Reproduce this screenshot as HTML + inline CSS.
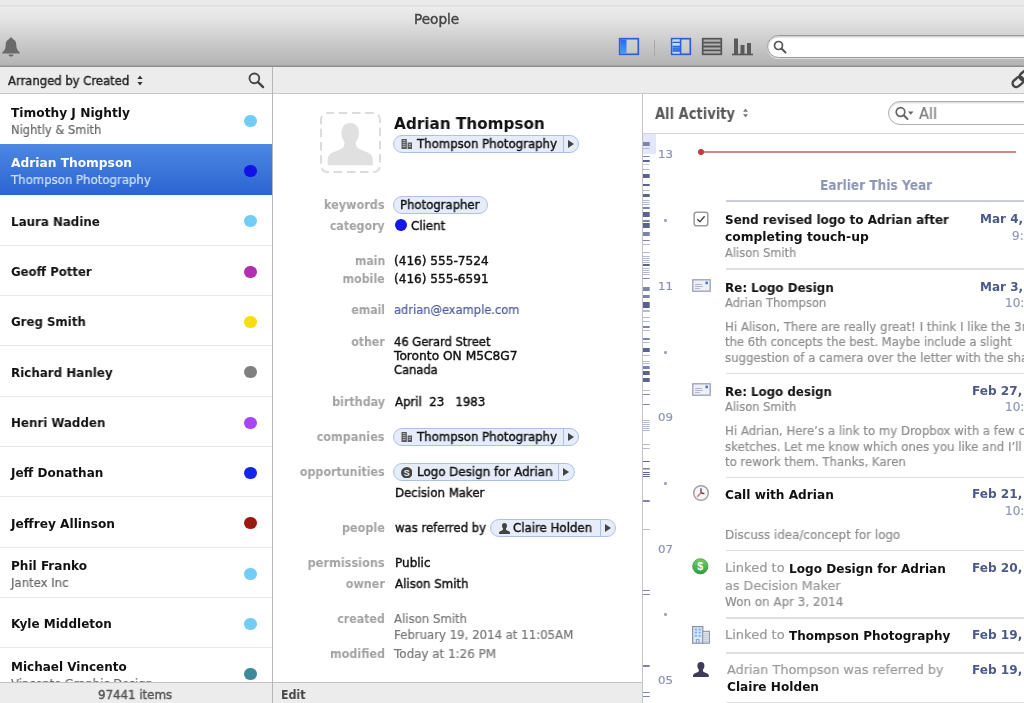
<!DOCTYPE html>
<html><head><meta charset="utf-8"><title>People</title>
<style>
*{box-sizing:border-box;margin:0;padding:0}
html,body{width:1024px;height:703px;overflow:hidden;background:#fff}
body{font-family:"DejaVu Sans","Liberation Sans",sans-serif;font-size:12px;color:#111;position:relative}
.a{position:absolute;white-space:nowrap}
.x{line-height:16px;will-change:transform}
#titlebar{left:0;top:0;width:1024px;height:67px;background:linear-gradient(#ebebeb 0,#e9e9e9 5px,#d9d9d9 6px,#ececec 7px,#e3e3e3 20px,#cdcdcd 40px,#b4b4b4 65px,#8e8e8e 66px,#8e8e8e 67px)}
#subbar{left:0;top:67px;width:1024px;height:27px;background:#ececec;border-bottom:1px solid #c8c8c8}
#vdiv1{left:271.6px;top:67px;width:1.4px;height:636px;background:#b6b6b6}
#vdiv2{left:641.8px;top:94px;width:1.4px;height:609px;background:#c2c2c8}
#status{left:0;top:682px;width:642px;height:21px;background:#ececec;border-top:1px solid #c2c2c2}
.pill{height:18px;border:1px solid #adc1e8;border-radius:9px;background:#e6edf9}
.pill i{position:absolute;top:0;width:1px;height:16px;background:#adc1e8}
.sep{left:725.5px;width:299px;height:1.6px;background:#dedede}
</style></head><body>
<div class="a" id="titlebar"></div>
<div class="a" id="subbar"></div>
<div class="a" style="left:0;top:143.8px;width:272px;height:1.2px;background:#eaeaea"></div>
<div class="a" style="left:244.4px;top:114.6px;width:12.3px;height:12.3px;border-radius:50%;background:#72cdf4"></div>
<div class="a" style="left:0;top:144px;width:272px;height:50.5px;background:linear-gradient(#4c88e3,#2b64d0)"></div>
<div class="a" style="left:244.4px;top:164.6px;width:12.3px;height:12.3px;border-radius:50%;background:#1111e8"></div>
<div class="a" style="left:0;top:244.8px;width:272px;height:1.2px;background:#eaeaea"></div>
<div class="a" style="left:244.4px;top:215.1px;width:12.3px;height:12.3px;border-radius:50%;background:#72cdf4"></div>
<div class="a" style="left:0;top:294.8px;width:272px;height:1.2px;background:#eaeaea"></div>
<div class="a" style="left:244.4px;top:265.6px;width:12.3px;height:12.3px;border-radius:50%;background:#b12fb0"></div>
<div class="a" style="left:0;top:345.3px;width:272px;height:1.2px;background:#eaeaea"></div>
<div class="a" style="left:244.4px;top:315.6px;width:12.3px;height:12.3px;border-radius:50%;background:#f6de12"></div>
<div class="a" style="left:0;top:395.8px;width:272px;height:1.2px;background:#eaeaea"></div>
<div class="a" style="left:244.4px;top:366.1px;width:12.3px;height:12.3px;border-radius:50%;background:#808080"></div>
<div class="a" style="left:0;top:445.8px;width:272px;height:1.2px;background:#eaeaea"></div>
<div class="a" style="left:244.4px;top:416.6px;width:12.3px;height:12.3px;border-radius:50%;background:#a945f2"></div>
<div class="a" style="left:0;top:496.3px;width:272px;height:1.2px;background:#eaeaea"></div>
<div class="a" style="left:244.4px;top:466.6px;width:12.3px;height:12.3px;border-radius:50%;background:#1226ea"></div>
<div class="a" style="left:0;top:546.8px;width:272px;height:1.2px;background:#eaeaea"></div>
<div class="a" style="left:244.4px;top:517.1px;width:12.3px;height:12.3px;border-radius:50%;background:#9a1a10"></div>
<div class="a" style="left:0;top:596.8px;width:272px;height:1.2px;background:#eaeaea"></div>
<div class="a" style="left:244.4px;top:567.6px;width:12.3px;height:12.3px;border-radius:50%;background:#72cdf4"></div>
<div class="a" style="left:0;top:647.3px;width:272px;height:1.2px;background:#eaeaea"></div>
<div class="a" style="left:244.4px;top:617.6px;width:12.3px;height:12.3px;border-radius:50%;background:#72cdf4"></div>
<div class="a" style="left:0;top:683.3px;width:272px;height:1.2px;background:#eaeaea"></div>
<div class="a" style="left:244.4px;top:668.1px;width:12.3px;height:12.3px;border-radius:50%;background:#3f8a98"></div>
<div class="a x" style="top:105.20px;font-size:12px;color:#111;font-weight:bold;left:10.60px;transform-origin:0 50%;transform:scaleX(1.0176);">Timothy J Nightly</div>
<div class="a x" style="top:122.20px;font-size:12px;color:#666;-webkit-text-stroke:0.2px;left:10.80px;transform-origin:0 50%;transform:scaleX(0.9543);">Nightly &amp; Smith</div>
<div class="a x" style="top:155.20px;font-size:12px;color:#fff;font-weight:bold;left:10.60px;transform-origin:0 50%;transform:scaleX(1.0191);">Adrian Thompson</div>
<div class="a x" style="top:172.20px;font-size:12px;color:#d2e2fb;-webkit-text-stroke:0.2px;left:10.80px;transform-origin:0 50%;transform:scaleX(0.9772);">Thompson Photography</div>
<div class="a x" style="top:213.80px;font-size:12px;color:#111;font-weight:bold;left:10.60px;transform-origin:0 50%;transform:scaleX(0.9876);">Laura Nadine</div>
<div class="a x" style="top:264.30px;font-size:12px;color:#111;font-weight:bold;left:10.60px;transform-origin:0 50%;transform:scaleX(0.9746);">Geoff Potter</div>
<div class="a x" style="top:314.30px;font-size:12px;color:#111;font-weight:bold;left:10.60px;transform-origin:0 50%;transform:scaleX(0.9801);">Greg Smith</div>
<div class="a x" style="top:364.80px;font-size:12px;color:#111;font-weight:bold;left:10.60px;transform-origin:0 50%;transform:scaleX(0.9916);">Richard Hanley</div>
<div class="a x" style="top:415.30px;font-size:12px;color:#111;font-weight:bold;left:10.60px;transform-origin:0 50%;transform:scaleX(0.9853);">Henri Wadden</div>
<div class="a x" style="top:465.30px;font-size:12px;color:#111;font-weight:bold;left:10.60px;transform-origin:0 50%;">Jeff Donathan</div>
<div class="a x" style="top:515.80px;font-size:12px;color:#111;font-weight:bold;left:10.60px;transform-origin:0 50%;transform:scaleX(1.0148);">Jeffrey Allinson</div>
<div class="a x" style="top:558.20px;font-size:12px;color:#111;font-weight:bold;left:10.60px;transform-origin:0 50%;transform:scaleX(1.0048);">Phil Franko</div>
<div class="a x" style="top:575.20px;font-size:12px;color:#666;-webkit-text-stroke:0.2px;left:10.80px;transform-origin:0 50%;transform:scaleX(0.9738);">Jantex Inc</div>
<div class="a x" style="top:616.30px;font-size:12px;color:#111;font-weight:bold;left:10.60px;transform-origin:0 50%;">Kyle Middleton</div>
<div class="a x" style="top:658.70px;font-size:12px;color:#111;font-weight:bold;left:10.60px;transform-origin:0 50%;">Michael Vincento</div>
<div class="a x" style="top:675.70px;font-size:12px;color:#666;-webkit-text-stroke:0.2px;left:10.80px;transform-origin:0 50%;transform:scaleX(0.9560);">Vincento Graphic Design</div>
<div class="a" id="status"></div>
<div class="a" id="vdiv1"></div>
<div class="a" id="vdiv2"></div>
<!-- sort arrows, search, bell -->
<svg class="a" style="left:135.7px;top:75px" width="8" height="11" viewBox="0 0 8 11"><path d="M4 0.5 L6.6 4 H1.4 Z M4 10.5 L6.6 7 H1.4 Z" fill="#333"/></svg>
<svg class="a" style="left:246.8px;top:70.8px" width="18.4" height="18.4" viewBox="0 0 20 20"><circle cx="8" cy="8" r="5.3" fill="none" stroke="#444" stroke-width="2"/><path d="M12 12 L17.5 17.5" stroke="#444" stroke-width="2.6" stroke-linecap="round"/></svg>
<svg class="a" style="left:0.6px;top:36px" width="20" height="22" viewBox="0 0 20 22"><path d="M10 1.5 C11 1.5 11.6 2.1 11.6 3 C14.3 3.8 15.3 6.2 15.3 9 C15.3 12.5 16.3 14.3 18.8 16.5 V17.6 H1.2 V16.5 C3.7 14.3 4.7 12.5 4.7 9 C4.7 6.2 5.7 3.8 8.4 3 C8.4 2.1 9 1.5 10 1.5 Z M7.6 18.4 H12.4 C12.4 19.8 11.4 20.6 10 20.6 C8.6 20.6 7.6 19.8 7.6 18.4 Z" fill="#6a6a6a"/></svg>
<!-- toolbar icons -->
<svg class="a" style="left:618px;top:37px" width="22" height="20" viewBox="0 0 22 20"><defs><linearGradient id="bl" x1="0" y1="0" x2="0" y2="1"><stop offset="0" stop-color="#1f6cf0"/><stop offset="1" stop-color="#4b98ff"/></linearGradient></defs><rect x="1.7" y="1.7" width="18.6" height="15.6" fill="rgba(255,255,255,.1)" stroke="#2a60d4" stroke-width="1.7"/><rect x="2.5" y="2.5" width="6" height="14" fill="url(#bl)"/></svg>
<div class="a" style="left:654px;top:40px;width:1px;height:16px;background:#a8a8a8"></div>
<svg class="a" style="left:670px;top:37px" width="22" height="20" viewBox="0 0 22 20"><rect x="1.7" y="1.7" width="18.6" height="15.6" fill="rgba(255,255,255,.12)" stroke="#2a60d4" stroke-width="1.7"/><rect x="2.5" y="2.5" width="7.5" height="14" fill="#c4d8fb"/><rect x="2.5" y="10.2" width="7.5" height="3.2" fill="#2a78f0"/><path d="M2.5 5.4 H10 M2.5 9.4 H10 M2.5 14 H10" stroke="#2a60d4" stroke-width="1.4"/><path d="M10.6 2 V17" stroke="#2a60d4" stroke-width="1.6"/></svg>
<svg class="a" style="left:701px;top:37px" width="22" height="20" viewBox="0 0 22 20"><rect x="1.7" y="1.7" width="18.6" height="15.6" fill="#b2b2b2" stroke="#555" stroke-width="1.7"/><path d="M2 5.6 H20 M2 9.5 H20 M2 13.4 H20" stroke="#555" stroke-width="1.9"/></svg>
<svg class="a" style="left:731px;top:37px" width="23" height="20" viewBox="0 0 23 20"><path d="M1 17.5 H22" stroke="#555" stroke-width="1.6"/><rect x="3" y="1.5" width="4" height="16" fill="#5a5a5a"/><rect x="9.5" y="8" width="4" height="9.5" fill="#5a5a5a"/><rect x="16" y="6" width="4" height="11.5" fill="#5a5a5a"/></svg>
<div class="a" style="left:767px;top:35px;width:280px;height:23px;border-radius:12px;background:#fff;border:1px solid #9a9a9a;box-shadow:inset 0 1px 2px rgba(0,0,0,.25),0 1px 0 rgba(255,255,255,.5)"></div>
<svg class="a" style="left:772px;top:38.6px" width="16" height="16" viewBox="0 0 16 16"><circle cx="6.5" cy="6.5" r="4" fill="none" stroke="#555" stroke-width="1.7"/><path d="M9.5 9.5 L13.5 13.5" stroke="#555" stroke-width="2" stroke-linecap="round"/></svg>
<svg class="a" style="left:1004px;top:68px" width="20" height="24" viewBox="1004 68 20 24"><g fill="none" stroke="#444" stroke-width="2.4"><rect x="-5.9" y="-3.7" width="11.8" height="7.4" rx="3.7" transform="translate(1018,81.9) rotate(-40)"/><rect x="-5.9" y="-3.7" width="11.8" height="7.4" rx="3.7" transform="translate(1025,75.2) rotate(-40)"/></g></svg>
<!-- DETAIL graphics -->
<svg class="a" style="left:318px;top:110px" width="65" height="65" viewBox="0 0 65 65"><rect x="3" y="3" width="59" height="59" rx="6.5" fill="none" stroke="#dcdcdc" stroke-width="2" stroke-dasharray="8.6 4.6" stroke-dashoffset="2"/></svg>
<svg class="a" style="left:325.3px;top:120.3px" width="50.4" height="48.4" viewBox="0 0 49 48" preserveAspectRatio="none"><path d="M24.5 3 C30 3 33 7 33 13 C33 17 31.5 20 30 22 C30 25 30.5 27 33 28.5 L42 32.5 C45 34 46.5 36.5 46.5 40 V45 H2.5 V40 C2.5 36.5 4 34 7 32.5 L16 28.5 C18.5 27 19 25 19 22 C17.5 20 16 17 16 13 C16 7 19 3 24.5 3 Z" fill="#e0e0e0"/></svg>
<div class="a pill" style="left:393px;top:135px;width:186px"><svg style="position:absolute;left:6.5px;top:2.5px" width="11.6" height="10" viewBox="0 0 11 10" preserveAspectRatio="none"><path d="M0.5 0 H5.5 V10 H0.5 Z M6.3 3.5 H10.5 V10 H6.3 Z" fill="#555"/><path d="M1.6 1.7 H4.4 M1.6 3.7 H4.4 M1.6 5.7 H4.4 M1.6 7.7 H4.4 M7.3 5.3 H9.5 M7.3 7.3 H9.5" stroke="#c9d3e8" stroke-width="0.8"/></svg><i style="left:169px"></i><svg style="position:absolute;left:174px;top:4.4px" width="6" height="8" viewBox="0 0 6 8"><path d="M0 0 L6 4 L0 8 Z" fill="#444"/></svg></div>
<div class="a pill" style="left:393px;top:196px;width:95px"></div>
<div class="a pill" style="left:393px;top:428px;width:186px"><svg style="position:absolute;left:6.5px;top:2.5px" width="11.6" height="10" viewBox="0 0 11 10" preserveAspectRatio="none"><path d="M0.5 0 H5.5 V10 H0.5 Z M6.3 3.5 H10.5 V10 H6.3 Z" fill="#555"/><path d="M1.6 1.7 H4.4 M1.6 3.7 H4.4 M1.6 5.7 H4.4 M1.6 7.7 H4.4 M7.3 5.3 H9.5 M7.3 7.3 H9.5" stroke="#c9d3e8" stroke-width="0.8"/></svg><i style="left:169px"></i><svg style="position:absolute;left:174px;top:4.4px" width="6" height="8" viewBox="0 0 6 8"><path d="M0 0 L6 4 L0 8 Z" fill="#444"/></svg></div>
<div class="a pill" style="left:393px;top:463px;width:182px"><svg style="position:absolute;left:6.6px;top:2.6px" width="11.5" height="11.5" viewBox="0 0 11 11"><circle cx="5.5" cy="5.5" r="5.5" fill="#444"/><text x="5.5" y="8.6" font-size="8.5" font-weight="bold" text-anchor="middle" fill="#e6edf9" font-family="Liberation Sans,sans-serif">S</text></svg><i style="left:164px"></i><svg style="position:absolute;left:169px;top:4.4px" width="6" height="8" viewBox="0 0 6 8"><path d="M0 0 L6 4 L0 8 Z" fill="#444"/></svg></div>
<div class="a pill" style="left:490px;top:519px;width:126px"><svg style="position:absolute;left:7.5px;top:2.6px" width="11" height="11" viewBox="0 0 11 11"><path d="M5.5 0 C7.2 0 8 1.2 8 2.8 C8 4 7.5 5 6.9 5.6 C6.9 6.6 7.2 7 8 7.4 L10 8.3 C10.7 8.7 11 9.2 11 10 V11 H0 V10 C0 9.2 0.3 8.7 1 8.3 L3 7.4 C3.8 7 4.1 6.6 4.1 5.6 C3.5 5 3 4 3 2.8 C3 1.2 3.8 0 5.5 0 Z" fill="#444"/></svg><i style="left:109px"></i><svg style="position:absolute;left:114px;top:4.4px" width="6" height="8" viewBox="0 0 6 8"><path d="M0 0 L6 4 L0 8 Z" fill="#444"/></svg></div>
<div class="a" style="left:395.3px;top:219.3px;width:11.8px;height:11.8px;border-radius:50%;background:#1416ea"></div>
<!-- ACTIVITY graphics -->
<div class="a" style="left:643px;top:134px;width:12.5px;height:20px;background:#e3e7f9"></div>
<svg class="a" style="left:643px;top:94px" width="8" height="609" viewBox="0 94 8 609"><rect x="0" y="142" width="6.7" height="4" fill="#7c84aa"/><rect x="0" y="148" width="6.7" height="1" fill="#b4b9d2"/><rect x="0" y="156" width="6.7" height="1" fill="#7c84aa"/><rect x="0" y="160" width="6.7" height="2" fill="#5a628f"/><rect x="0" y="164" width="6.7" height="1" fill="#c8cce0"/><rect x="0" y="169" width="6.7" height="1" fill="#b4b9d2"/><rect x="0" y="174" width="6.7" height="4" fill="#5a628f"/><rect x="0" y="184" width="6.7" height="2" fill="#5a628f"/><rect x="0" y="190" width="6.7" height="1" fill="#b4b9d2"/><rect x="0" y="194" width="6.7" height="3" fill="#5a628f"/><rect x="0" y="200" width="6.7" height="1" fill="#b4b9d2"/><rect x="0" y="202" width="6.7" height="1" fill="#b4b9d2"/><rect x="0" y="204" width="6.7" height="1" fill="#b4b9d2"/><rect x="0" y="207" width="6.7" height="2" fill="#7c84aa"/><rect x="0" y="212" width="6.7" height="5" fill="#5a628f"/><rect x="0" y="220" width="6.7" height="2" fill="#7c84aa"/><rect x="0" y="223" width="6.7" height="5" fill="#5a628f"/><rect x="0" y="232" width="6.7" height="4" fill="#7c84aa"/><rect x="0" y="240" width="6.7" height="1" fill="#7c84aa"/><rect x="0" y="244" width="6.7" height="1" fill="#b4b9d2"/><rect x="0" y="252" width="6.7" height="1" fill="#b4b9d2"/><rect x="0" y="256" width="6.7" height="1" fill="#b4b9d2"/><rect x="0" y="258" width="6.7" height="1" fill="#b4b9d2"/><rect x="0" y="260" width="6.7" height="1" fill="#b4b9d2"/><rect x="0" y="262" width="6.7" height="1" fill="#b4b9d2"/><rect x="0" y="264" width="6.7" height="2" fill="#5a628f"/><rect x="0" y="268" width="6.7" height="1" fill="#b4b9d2"/><rect x="0" y="270" width="6.7" height="1" fill="#b4b9d2"/><rect x="0" y="272" width="6.7" height="1" fill="#b4b9d2"/><rect x="0" y="274" width="6.7" height="1" fill="#b4b9d2"/><rect x="0" y="278" width="6.7" height="1" fill="#7c84aa"/><rect x="0" y="287" width="6.7" height="4" fill="#7c84aa"/><rect x="0" y="295" width="6.7" height="3" fill="#7c84aa"/><rect x="0" y="302" width="6.7" height="6" fill="#5a628f"/><rect x="0" y="310" width="6.7" height="2" fill="#b4b9d2"/><rect x="0" y="317" width="6.7" height="1" fill="#b4b9d2"/><rect x="0" y="321" width="6.7" height="1" fill="#b4b9d2"/><rect x="0" y="326" width="6.7" height="2" fill="#7c84aa"/><rect x="0" y="330" width="6.7" height="1" fill="#b4b9d2"/><rect x="0" y="338" width="6.7" height="2" fill="#7c84aa"/><rect x="0" y="342" width="6.7" height="1" fill="#b4b9d2"/><rect x="0" y="348" width="6.7" height="4" fill="#5a628f"/><rect x="0" y="355" width="6.7" height="1" fill="#b4b9d2"/><rect x="0" y="361" width="6.7" height="1" fill="#b4b9d2"/><rect x="0" y="363" width="6.7" height="1" fill="#b4b9d2"/><rect x="0" y="366" width="6.7" height="3" fill="#7c84aa"/><rect x="0" y="371" width="6.7" height="4" fill="#5a628f"/><rect x="0" y="378" width="6.7" height="4" fill="#5a628f"/><rect x="0" y="390" width="6.7" height="1" fill="#b4b9d2"/><rect x="0" y="394" width="6.7" height="1" fill="#7c84aa"/><rect x="0" y="404" width="6.7" height="1" fill="#7c84aa"/><rect x="0" y="420" width="6.7" height="1" fill="#b4b9d2"/><rect x="0" y="422" width="6.7" height="1" fill="#b4b9d2"/><rect x="0" y="424" width="6.7" height="1" fill="#b4b9d2"/><rect x="0" y="426" width="6.7" height="1" fill="#b4b9d2"/><rect x="0" y="428" width="6.7" height="1" fill="#b4b9d2"/><rect x="0" y="430" width="6.7" height="1" fill="#b4b9d2"/><rect x="0" y="444" width="6.7" height="1" fill="#b4b9d2"/><rect x="0" y="448" width="6.7" height="1" fill="#b4b9d2"/><rect x="0" y="461" width="6.7" height="1" fill="#5a628f"/><rect x="0" y="468" width="6.7" height="2" fill="#7c84aa"/><rect x="0" y="469" width="6.7" height="1" fill="#b4b9d2"/><rect x="0" y="472" width="6.7" height="1" fill="#5a628f"/><rect x="0" y="474" width="6.7" height="1" fill="#5a628f"/><rect x="0" y="476" width="6.7" height="1" fill="#5a628f"/><rect x="0" y="500" width="6.7" height="2" fill="#7c84aa"/><rect x="0" y="529" width="6.7" height="1" fill="#b4b9d2"/><rect x="0" y="590" width="6.7" height="1" fill="#7c84aa"/><rect x="0" y="594" width="6.7" height="1" fill="#7c84aa"/><rect x="0" y="665" width="6.7" height="2" fill="#7c84aa"/><rect x="0" y="692" width="6.7" height="1" fill="#7c84aa"/><rect x="0" y="696" width="6.7" height="1" fill="#7c84aa"/></svg>
<div class="a" style="left:643px;top:133px;width:381px;height:1px;background:#d4d4d4"></div>
<svg class="a" style="left:742px;top:108px" width="7" height="10" viewBox="0 0 7 10"><path d="M3.5 0.5 L6 3.8 H1 Z M3.5 9.5 L6 6.2 H1 Z" fill="#777"/></svg>
<div class="a" style="left:888px;top:101px;width:160px;height:24.4px;border-radius:13px;background:#fff;border:1px solid #b0b0b0;box-shadow:inset 0 1px 2px rgba(0,0,0,.18)"></div>
<svg class="a" style="left:894px;top:105px" width="22" height="17" viewBox="0 0 22 17"><circle cx="6.5" cy="7" r="4.3" fill="none" stroke="#666" stroke-width="1.7"/><path d="M9.7 10.2 L13.5 14" stroke="#666" stroke-width="2" stroke-linecap="round"/><path d="M14 6.5 H19.5 L16.75 9.8 Z" fill="#666"/></svg>
<div class="a" style="left:700px;top:151px;width:316px;height:2px;background:#d48484"></div>
<div class="a" style="left:697.5px;top:149px;width:6px;height:6px;border-radius:50%;background:#c23c3c"></div>
<div class="a" style="left:725.5px;top:200px;width:299px;height:2px;background:#c9cde2"></div>
<div class="a" style="left:664px;top:219px;width:2.5px;height:2.5px;border-radius:50%;background:#9aa3c4"></div><div class="a" style="left:664px;top:351px;width:2.5px;height:2.5px;border-radius:50%;background:#9aa3c4"></div><div class="a" style="left:664px;top:482px;width:2.5px;height:2.5px;border-radius:50%;background:#9aa3c4"></div><div class="a" style="left:664px;top:613px;width:2.5px;height:2.5px;border-radius:50%;background:#9aa3c4"></div>
<div class="a sep" style="top:268.4px"></div><div class="a sep" style="top:372.6px"></div><div class="a sep" style="top:476.8px"></div><div class="a sep" style="top:549.8px"></div><div class="a sep" style="top:617.3px"></div><div class="a sep" style="top:652.2px"></div><div class="a sep" style="top:701.6px"></div>
<svg class="a" style="left:693px;top:211px" width="16" height="16" viewBox="0 0 16 16"><rect x="1.2" y="1.2" width="13.6" height="13.6" rx="2.4" fill="#fff" stroke="#9c9c9c" stroke-width="1.5"/><path d="M4.3 8.2 L6.9 10.8 L11.6 5.2" fill="none" stroke="#444" stroke-width="1.4"/></svg>
<svg class="a" style="left:691.5px;top:278.8px" width="19" height="13" viewBox="0 0 19 13"><rect x="0.8" y="0.8" width="17.4" height="11.4" fill="#eef0f6" stroke="#9a9fb4" stroke-width="1.3"/><path d="M3 5.5 H10 M3 7.5 H11 M3 9.5 H8" stroke="#aab0c8" stroke-width="0.9"/><rect x="13.4" y="2.6" width="2.6" height="2.6" fill="#3f7fe8"/></svg>
<svg class="a" style="left:691.5px;top:383.3px" width="19" height="13" viewBox="0 0 19 13"><rect x="0.8" y="0.8" width="17.4" height="11.4" fill="#eef0f6" stroke="#9a9fb4" stroke-width="1.3"/><path d="M3 5.5 H10 M3 7.5 H11 M3 9.5 H8" stroke="#aab0c8" stroke-width="0.9"/><rect x="13.4" y="2.6" width="2.6" height="2.6" fill="#3f7fe8"/></svg>
<svg class="a" style="left:691.6px;top:484.1px" width="18" height="18" viewBox="0 0 18 18"><circle cx="9" cy="9" r="7.3" fill="#f5f5f9" stroke="#a2a2a6" stroke-width="1.5"/><path d="M9 4.3 V9.2" stroke="#444" stroke-width="1.3"/><path d="M9 9 L12.4 9.6" stroke="#444" stroke-width="1.3"/><path d="M9.2 8.8 L5.2 12.8" stroke="#e07070" stroke-width="1.4"/></svg>
<svg class="a" style="left:692.2px;top:558.3px" width="16.6" height="16.6" viewBox="0 0 18 18"><defs><linearGradient id="gg" x1="0" y1="0" x2="0" y2="1"><stop offset="0" stop-color="#6fd070"/><stop offset="1" stop-color="#2f9e3c"/></linearGradient></defs><circle cx="9" cy="9" r="8.3" fill="url(#gg)" stroke="#2c9438" stroke-width="0.8"/><text x="9" y="13" font-size="11.5" font-weight="bold" text-anchor="middle" fill="#fff" font-family="Liberation Sans,sans-serif">$</text></svg>
<svg class="a" style="left:690.7px;top:625.2px" width="20" height="19" viewBox="0 0 20 19"><rect x="1.6" y="1.6" width="10.2" height="16.6" fill="#d8e8fc" stroke="#8a92aa" stroke-width="1.2"/><rect x="11.8" y="6.3" width="6.6" height="11.9" fill="#e6e8ee" stroke="#8a92aa" stroke-width="1.1"/><path d="M3.7 4.5 H6 M7.5 4.5 H9.8 M3.7 7.7 H6 M7.5 7.7 H9.8 M3.7 10.9 H6 M7.5 10.9 H9.8" stroke="#7fb0f4" stroke-width="1.8"/><path d="M5.4 18 V14.5 H8 V18" fill="none" stroke="#8a92aa" stroke-width="0.9"/><path d="M13 8.8 H17.4 M13 10.8 H17.4 M13 12.8 H17.4 M13 14.8 H17.4 M13 16.6 H17.4" stroke="#b4bace" stroke-width="0.8"/></svg>
<svg class="a" style="left:693.2px;top:662.4px" width="15.8" height="15" viewBox="0.5 0.5 17 16.7" preserveAspectRatio="none"><path d="M9 0.5 C11.6 0.5 12.8 2.4 12.8 4.8 C12.8 6.6 12.1 8 11.2 9 C11.2 10.6 11.6 11.3 12.8 11.9 L15.8 13.2 C17 13.8 17.5 14.7 17.5 16 V17.2 H0.5 V16 C0.5 14.7 1 13.8 2.2 13.2 L5.2 11.9 C6.4 11.3 6.8 10.6 6.8 9 C5.9 8 5.2 6.6 5.2 4.8 C5.2 2.4 6.4 0.5 9 0.5 Z" fill="#3c3c5a"/></svg>
<div class="a x" style="top:11.30px;font-size:13.5px;color:#444;-webkit-text-stroke:0.4px;left:414.40px;transform-origin:0 50%;transform:scaleX(1.0076);">People</div>
<div class="a x" style="top:73.00px;font-size:12px;color:#222;-webkit-text-stroke:0.4px;left:8.00px;transform-origin:0 50%;transform:scaleX(0.9674);">Arranged by Created</div>
<div class="a x" style="top:686.60px;font-size:12px;color:#555;-webkit-text-stroke:0.4px;left:97.80px;transform-origin:0 50%;transform:scaleX(0.9833);">97441 items</div>
<div class="a x" style="top:686.80px;font-size:12px;color:#444;font-weight:bold;left:280.60px;transform-origin:0 50%;transform:scaleX(0.9159);">Edit</div>
<div class="a x" style="top:116.20px;font-size:15.4px;color:#111;font-weight:bold;left:393.80px;transform-origin:0 50%;transform:scaleX(0.9903);">Adrian Thompson</div>
<div class="a x" style="top:197.40px;font-size:12px;color:#a2a2a2;font-weight:bold;right:639.20px;transform-origin:100% 50%;transform:scaleX(0.9395);">keywords</div>
<div class="a x" style="top:218.40px;font-size:12px;color:#a2a2a2;font-weight:bold;right:639.20px;transform-origin:100% 50%;transform:scaleX(0.9184);">category</div>
<div class="a x" style="top:218.40px;font-size:12px;color:#111;-webkit-text-stroke:0.4px;left:411.30px;transform-origin:0 50%;transform:scaleX(0.9842);">Client</div>
<div class="a x" style="top:253.40px;font-size:12px;color:#a2a2a2;font-weight:bold;right:639.20px;transform-origin:100% 50%;transform:scaleX(0.9109);">main</div>
<div class="a x" style="top:253.40px;font-size:12px;color:#111;-webkit-text-stroke:0.4px;left:394.00px;transform-origin:0 50%;transform:scaleX(1.0079);">(416) 555-7524</div>
<div class="a x" style="top:270.70px;font-size:12px;color:#a2a2a2;font-weight:bold;right:639.20px;transform-origin:100% 50%;transform:scaleX(0.9234);">mobile</div>
<div class="a x" style="top:270.70px;font-size:12px;color:#111;-webkit-text-stroke:0.4px;left:394.00px;transform-origin:0 50%;transform:scaleX(1.0079);">(416) 555-6591</div>
<div class="a x" style="top:302.40px;font-size:12px;color:#a2a2a2;font-weight:bold;right:639.20px;transform-origin:100% 50%;transform:scaleX(0.9089);">email</div>
<div class="a x" style="top:302.40px;font-size:12px;color:#4a5a9a;-webkit-text-stroke:0.2px;left:394.00px;transform-origin:0 50%;transform:scaleX(0.9551);">adrian@example.com</div>
<div class="a x" style="top:334.40px;font-size:12px;color:#a2a2a2;font-weight:bold;right:639.20px;transform-origin:100% 50%;transform:scaleX(0.9100);">other</div>
<div class="a x" style="top:334.40px;font-size:12px;color:#111;-webkit-text-stroke:0.4px;left:394.00px;transform-origin:0 50%;transform:scaleX(0.9576);">46 Gerard Street</div>
<div class="a x" style="top:348.40px;font-size:12px;color:#111;-webkit-text-stroke:0.4px;left:394.00px;transform-origin:0 50%;transform:scaleX(1.0182);">Toronto ON M5C8G7</div>
<div class="a x" style="top:362.40px;font-size:12px;color:#111;-webkit-text-stroke:0.4px;left:394.00px;transform-origin:0 50%;transform:scaleX(0.9568);">Canada</div>
<div class="a x" style="top:394.40px;font-size:12px;color:#a2a2a2;font-weight:bold;right:639.20px;transform-origin:100% 50%;transform:scaleX(0.9273);">birthday</div>
<div class="a x" style="top:394.40px;font-size:12px;color:#111;-webkit-text-stroke:0.4px;left:394.60px;transform-origin:0 50%;transform:scaleX(0.9771);">April&nbsp; 23&nbsp;&nbsp; 1983</div>
<div class="a x" style="top:429.40px;font-size:12px;color:#a2a2a2;font-weight:bold;right:639.20px;transform-origin:100% 50%;transform:scaleX(0.9352);">companies</div>
<div class="a x" style="top:464.40px;font-size:12px;color:#a2a2a2;font-weight:bold;right:639.20px;transform-origin:100% 50%;transform:scaleX(0.9252);">opportunities</div>
<div class="a x" style="top:484.70px;font-size:12px;color:#111;-webkit-text-stroke:0.4px;left:394.80px;transform-origin:0 50%;transform:scaleX(0.9765);">Decision Maker</div>
<div class="a x" style="top:520.40px;font-size:12px;color:#a2a2a2;font-weight:bold;right:639.20px;transform-origin:100% 50%;transform:scaleX(0.9361);">people</div>
<div class="a x" style="top:520.40px;font-size:12px;color:#111;-webkit-text-stroke:0.4px;left:394.60px;transform-origin:0 50%;transform:scaleX(0.9699);">was referred by</div>
<div class="a x" style="top:555.40px;font-size:12px;color:#a2a2a2;font-weight:bold;right:639.20px;transform-origin:100% 50%;transform:scaleX(0.9437);">permissions</div>
<div class="a x" style="top:555.40px;font-size:12px;color:#111;-webkit-text-stroke:0.4px;left:394.60px;transform-origin:0 50%;transform:scaleX(0.9939);">Public</div>
<div class="a x" style="top:575.80px;font-size:12px;color:#a2a2a2;font-weight:bold;right:639.20px;transform-origin:100% 50%;transform:scaleX(0.9347);">owner</div>
<div class="a x" style="top:575.80px;font-size:12px;color:#111;-webkit-text-stroke:0.4px;left:394.60px;transform-origin:0 50%;transform:scaleX(0.9820);">Alison Smith</div>
<div class="a x" style="top:610.90px;font-size:12px;color:#a2a2a2;font-weight:bold;right:639.20px;transform-origin:100% 50%;transform:scaleX(0.9162);">created</div>
<div class="a x" style="top:610.90px;font-size:12px;color:#777;-webkit-text-stroke:0.2px;left:394.00px;transform-origin:0 50%;transform:scaleX(0.9754);">Alison Smith</div>
<div class="a x" style="top:626.90px;font-size:12px;color:#777;-webkit-text-stroke:0.2px;left:394.00px;transform-origin:0 50%;transform:scaleX(0.9778);">February 19, 2014 at 11:05AM</div>
<div class="a x" style="top:646.40px;font-size:12px;color:#a2a2a2;font-weight:bold;right:639.20px;transform-origin:100% 50%;transform:scaleX(0.9327);">modified</div>
<div class="a x" style="top:646.40px;font-size:12px;color:#777;-webkit-text-stroke:0.2px;left:394.00px;transform-origin:0 50%;transform:scaleX(0.9927);">Today at 1:26 PM</div>
<div class="a x" style="top:135.90px;font-size:12px;color:#111;-webkit-text-stroke:0.4px;left:417.20px;transform-origin:0 50%;transform:scaleX(0.9786);">Thompson Photography</div>
<div class="a x" style="top:196.80px;font-size:12px;color:#111;-webkit-text-stroke:0.4px;left:400.40px;transform-origin:0 50%;transform:scaleX(0.9720);">Photographer</div>
<div class="a x" style="top:429.10px;font-size:12px;color:#111;-webkit-text-stroke:0.4px;left:417.20px;transform-origin:0 50%;transform:scaleX(0.9786);">Thompson Photography</div>
<div class="a x" style="top:464.20px;font-size:12px;color:#111;-webkit-text-stroke:0.4px;left:417.20px;transform-origin:0 50%;transform:scaleX(0.9891);">Logo Design for Adrian</div>
<div class="a x" style="top:520.10px;font-size:12px;color:#111;-webkit-text-stroke:0.4px;left:513.30px;transform-origin:0 50%;transform:scaleX(0.9817);">Claire Holden</div>
<div class="a x" style="top:105.80px;font-size:15px;color:#5a5a5a;font-weight:bold;left:655.10px;transform-origin:0 50%;transform:scaleX(0.8715);">All Activity</div>
<div class="a x" style="top:105.60px;font-size:15px;color:#7e7e7e;-webkit-text-stroke:0.2px;left:918.80px;transform-origin:0 50%;transform:scaleX(0.9673);">All</div>
<div class="a x" style="top:177.00px;font-size:14px;color:#8d95b6;font-weight:bold;left:820.10px;transform-origin:0 50%;transform:scaleX(0.8697);">Earlier This Year</div>
<div class="a x" style="top:146.70px;font-size:11px;color:#8c94b5;-webkit-text-stroke:0.2px;left:658.00px;transform-origin:0 50%;transform:scaleX(1.0714);">13</div>
<div class="a x" style="top:278.70px;font-size:11px;color:#8c94b5;-webkit-text-stroke:0.2px;left:658.00px;transform-origin:0 50%;transform:scaleX(1.0714);">11</div>
<div class="a x" style="top:409.70px;font-size:11px;color:#8c94b5;-webkit-text-stroke:0.2px;left:658.00px;transform-origin:0 50%;transform:scaleX(1.0714);">09</div>
<div class="a x" style="top:541.70px;font-size:11px;color:#8c94b5;-webkit-text-stroke:0.2px;left:658.00px;transform-origin:0 50%;transform:scaleX(1.0714);">07</div>
<div class="a x" style="top:672.70px;font-size:11px;color:#8c94b5;-webkit-text-stroke:0.2px;left:658.00px;transform-origin:0 50%;transform:scaleX(1.0714);">05</div>
<div class="a x" style="top:211.70px;font-size:12px;color:#111;font-weight:bold;left:724.90px;transform-origin:0 50%;transform:scaleX(0.9929);">Send revised logo to Adrian after</div>
<div class="a x" style="top:229.40px;font-size:12px;color:#111;font-weight:bold;left:724.90px;transform-origin:0 50%;transform:scaleX(1.0253);">completing touch-up</div>
<div class="a x" style="top:245.10px;font-size:12px;color:#8e8e8e;-webkit-text-stroke:0.2px;left:724.90px;transform-origin:0 50%;transform:scaleX(0.9527);">Alison Smith</div>
<div class="a x" style="top:211.40px;font-size:12px;color:#4c5a8a;font-weight:bold;left:979.50px;transform-origin:0 50%;transform:scaleX(0.9943);">Mar 4,</div>
<div class="a x" style="top:228.00px;font-size:12px;color:#8d97b8;-webkit-text-stroke:0.2px;left:1011.90px;transform-origin:0 50%;transform:scaleX(0.9793);">9:</div>
<div class="a x" style="top:279.70px;font-size:12px;color:#111;font-weight:bold;left:724.90px;transform-origin:0 50%;transform:scaleX(0.9913);">Re: Logo Design</div>
<div class="a x" style="top:295.10px;font-size:12px;color:#8e8e8e;-webkit-text-stroke:0.2px;left:724.90px;transform-origin:0 50%;transform:scaleX(0.9606);">Adrian Thompson</div>
<div class="a x" style="top:319.10px;font-size:12px;color:#8e8e8e;-webkit-text-stroke:0.2px;left:724.90px;transform-origin:0 50%;transform:scaleX(0.9793);">Hi Alison, There are really great! I think I like the 3r</div>
<div class="a x" style="top:334.40px;font-size:12px;color:#8e8e8e;-webkit-text-stroke:0.2px;left:724.90px;transform-origin:0 50%;transform:scaleX(0.9653);">the 6th concepts the best. Maybe include a slight</div>
<div class="a x" style="top:350.10px;font-size:12px;color:#8e8e8e;-webkit-text-stroke:0.2px;left:724.90px;transform-origin:0 50%;transform:scaleX(0.9793);">suggestion of a camera over the letter with the shap</div>
<div class="a x" style="top:279.40px;font-size:12px;color:#4c5a8a;font-weight:bold;left:979.50px;transform-origin:0 50%;transform:scaleX(0.9943);">Mar 3,</div>
<div class="a x" style="top:295.00px;font-size:12px;color:#8d97b8;-webkit-text-stroke:0.2px;left:1004.70px;transform-origin:0 50%;transform:scaleX(0.9793);">10:</div>
<div class="a x" style="top:383.70px;font-size:12px;color:#111;font-weight:bold;left:724.90px;transform-origin:0 50%;transform:scaleX(0.9864);">Re: Logo design</div>
<div class="a x" style="top:399.10px;font-size:12px;color:#8e8e8e;-webkit-text-stroke:0.2px;left:724.90px;transform-origin:0 50%;transform:scaleX(0.9527);">Alison Smith</div>
<div class="a x" style="top:423.10px;font-size:12px;color:#8e8e8e;-webkit-text-stroke:0.2px;left:724.90px;transform-origin:0 50%;transform:scaleX(0.9793);">Hi Adrian, Here’s a link to my Dropbox with a few c</div>
<div class="a x" style="top:439.10px;font-size:12px;color:#8e8e8e;-webkit-text-stroke:0.2px;left:724.90px;transform-origin:0 50%;transform:scaleX(0.9793);">sketches. Let me know which ones you like and I’ll</div>
<div class="a x" style="top:454.10px;font-size:12px;color:#8e8e8e;-webkit-text-stroke:0.2px;left:724.90px;transform-origin:0 50%;transform:scaleX(0.9763);">to rework them. Thanks, Karen</div>
<div class="a x" style="top:383.40px;font-size:12px;color:#4c5a8a;font-weight:bold;left:972.00px;transform-origin:0 50%;transform:scaleX(1.0085);">Feb 27,</div>
<div class="a x" style="top:399.00px;font-size:12px;color:#8d97b8;-webkit-text-stroke:0.2px;left:1004.70px;transform-origin:0 50%;transform:scaleX(0.9793);">10:</div>
<div class="a x" style="top:486.70px;font-size:12px;color:#111;font-weight:bold;left:724.90px;transform-origin:0 50%;transform:scaleX(1.0119);">Call with Adrian</div>
<div class="a x" style="top:503.00px;font-size:12px;color:#8d97b8;-webkit-text-stroke:0.2px;left:1004.70px;transform-origin:0 50%;transform:scaleX(0.9793);">10:</div>
<div class="a x" style="top:527.10px;font-size:12px;color:#8e8e8e;-webkit-text-stroke:0.2px;left:724.90px;transform-origin:0 50%;transform:scaleX(0.9915);">Discuss idea/concept for logo</div>
<div class="a x" style="top:486.40px;font-size:12px;color:#4c5a8a;font-weight:bold;left:972.00px;transform-origin:0 50%;transform:scaleX(1.0085);">Feb 21,</div>
<div class="a x" style="top:559.90px;font-size:13px;color:#999999;-webkit-text-stroke:0.2px;left:724.90px;transform-origin:0 50%;transform:scaleX(0.9951);">Linked to</div>
<div class="a x" style="top:560.70px;font-size:12px;color:#111;font-weight:bold;left:789.40px;transform-origin:0 50%;transform:scaleX(1.0071);">Logo Design for Adrian</div>
<div class="a x" style="top:577.80px;font-size:13px;color:#999999;-webkit-text-stroke:0.2px;left:724.90px;transform-origin:0 50%;transform:scaleX(0.9801);">as Decision Maker</div>
<div class="a x" style="top:594.10px;font-size:12px;color:#8e8e8e;-webkit-text-stroke:0.2px;left:724.90px;transform-origin:0 50%;transform:scaleX(0.9928);">Won on Apr 3, 2014</div>
<div class="a x" style="top:560.40px;font-size:12px;color:#4c5a8a;font-weight:bold;left:972.00px;transform-origin:0 50%;transform:scaleX(1.0085);">Feb 20,</div>
<div class="a x" style="top:626.90px;font-size:13px;color:#999999;-webkit-text-stroke:0.2px;left:724.90px;transform-origin:0 50%;transform:scaleX(0.9951);">Linked to</div>
<div class="a x" style="top:627.70px;font-size:12px;color:#111;font-weight:bold;left:789.40px;transform-origin:0 50%;">Thompson Photography</div>
<div class="a x" style="top:627.40px;font-size:12px;color:#4c5a8a;font-weight:bold;left:972.00px;transform-origin:0 50%;transform:scaleX(1.0085);">Feb 19,</div>
<div class="a x" style="top:661.50px;font-size:13px;color:#999999;-webkit-text-stroke:0.2px;left:727.10px;transform-origin:0 50%;transform:scaleX(0.9841);">Adrian Thompson was referred by</div>
<div class="a x" style="top:678.70px;font-size:12px;color:#111;font-weight:bold;left:727.10px;transform-origin:0 50%;transform:scaleX(1.0105);">Claire Holden</div>
<div class="a x" style="top:662.40px;font-size:12px;color:#4c5a8a;font-weight:bold;left:972.00px;transform-origin:0 50%;transform:scaleX(1.0085);">Feb 19,</div>
</body></html>
